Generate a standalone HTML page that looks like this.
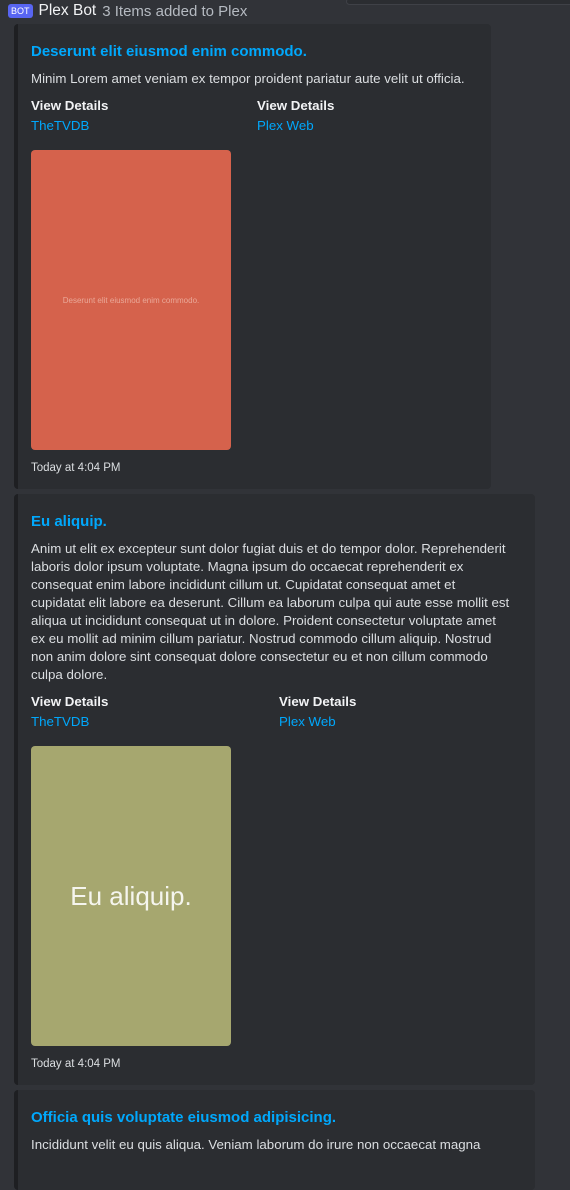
<!DOCTYPE html>
<html><head><meta charset="utf-8"><style>
*{margin:0;padding:0;box-sizing:border-box}
body{width:570px;height:1147px;overflow:hidden;background:#313338;font-family:"Liberation Sans",sans-serif;color:#dbdee1;position:relative}
.top{position:absolute;left:346px;top:-2px;width:230px;height:7px;border:1px solid #3f4147;border-radius:4px;background:#2b2d31}
.hdr{position:absolute;left:8px;top:2px;height:18px;display:flex;align-items:center}
.bot{background:#5865f2;color:#fff;font-size:9px;padding:1px 3px;border-radius:3px;margin-right:6px;line-height:12px}
.name{color:#f2f3f5;font-size:15.5px;margin-right:6px}
.sub{color:#b5bac1;font-size:15px}
.embed{position:absolute;left:14px;background:#2b2d31;border-left:4px solid #1e1f22;border-radius:4px;padding:18px 13px 0 13px}
.t{color:#00a8fc;font-weight:bold;font-size:15px;line-height:20px}
.d{font-size:13.3px;line-height:18px;margin-top:8px;color:#dbdee1;white-space:nowrap}
.f{display:flex;margin-top:8px}
.f div{font-size:13.3px;line-height:20px}
.f b{color:#f2f3f5;display:block}
.f a{color:#00a8fc;text-decoration:none}
.img{width:200px;height:300px;border-radius:4px;margin-top:14px;display:flex;align-items:center;justify-content:center;text-align:center}
.ts{font-size:11.5px;margin-top:12px;color:#dbdee1}
</style></head><body>
<div class="top"></div>
<div class="hdr"><span class="bot">BOT</span><span class="name">Plex Bot</span><span class="sub">3 Items added to Plex</span></div>

<div class="embed" style="top:24px;width:477px;height:465px">
<div class="t">Deserunt elit eiusmod enim commodo.</div>
<div class="d">Minim Lorem amet veniam ex tempor proident pariatur aute velit ut officia.</div>
<div class="f"><div style="width:226px"><b>View Details</b><a>TheTVDB</a></div><div><b>View Details</b><a>Plex Web</a></div></div>
<div class="img" style="background:#d5624c;font-size:8px;color:#eaa898">Deserunt elit eiusmod enim commodo.</div>
<div class="ts">Today at 4:04 PM</div>
</div>

<div class="embed" style="top:494px;width:521px;height:591px">
<div class="t">Eu aliquip.</div>
<div class="d">Anim ut elit ex excepteur sunt dolor fugiat duis et do tempor dolor. Reprehenderit<br>laboris dolor ipsum voluptate. Magna ipsum do occaecat reprehenderit ex<br>consequat enim labore incididunt cillum ut. Cupidatat consequat amet et<br>cupidatat elit labore ea deserunt. Cillum ea laborum culpa qui aute esse mollit est<br>aliqua ut incididunt consequat ut in dolore. Proident consectetur voluptate amet<br>ex eu mollit ad minim cillum pariatur. Nostrud commodo cillum aliquip. Nostrud<br>non anim dolore sint consequat dolore consectetur eu et non cillum commodo<br>culpa dolore.</div>
<div class="f"><div style="width:248px"><b>View Details</b><a>TheTVDB</a></div><div><b>View Details</b><a>Plex Web</a></div></div>
<div class="img" style="background:#a6a76f;font-size:26px;color:#f5f5ee">Eu aliquip.</div>
<div class="ts">Today at 4:04 PM</div>
</div>

<div class="embed" style="top:1090px;width:521px;height:100px">
<div class="t">Officia quis voluptate eiusmod adipisicing.</div>
<div class="d">Incididunt velit eu quis aliqua. Veniam laborum do irure non occaecat magna</div>
</div>
</body></html>
